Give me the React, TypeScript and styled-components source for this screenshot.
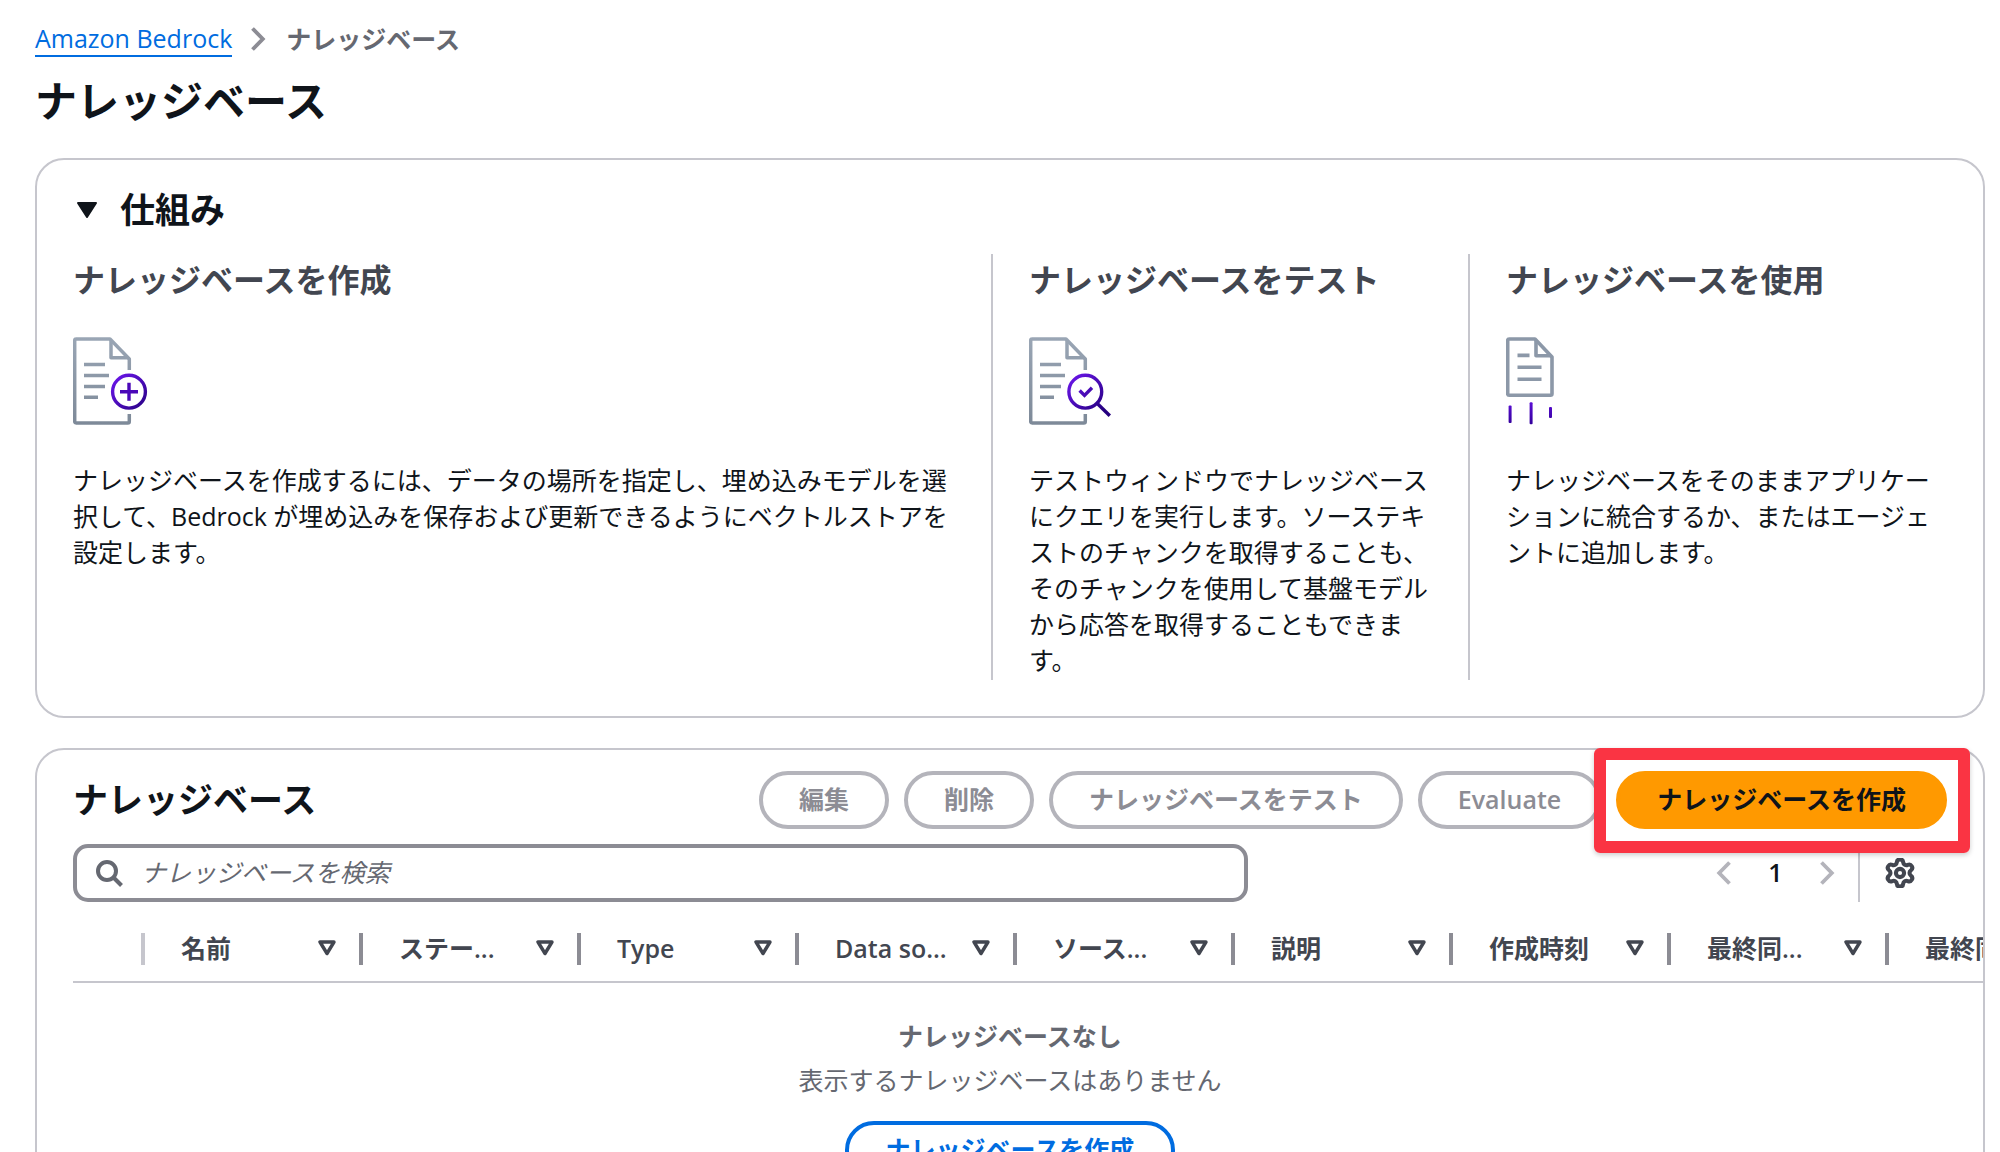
import React from 'react';
import styled, { createGlobalStyle, css } from 'styled-components';
import { Settings } from 'lucide-react';

const c = {
  text: '#0f141a',
  heading: '#424650',
  muted: '#656871',
  border: '#c6c6cd',
  control: '#8c8c94',
  disabled: '#b4b4bb',
  link: '#006ce0',
  primary: '#ff9900',
  mark: '#fa3443',
};

const GlobalStyle = createGlobalStyle`
  * { box-sizing: border-box; }
  body {
    margin: 0;
    background: #ffffff;
    color: ${c.text};
    font-family: 'Open Sans', 'Noto Sans CJK JP', sans-serif;
    font-size: 25px;
    line-height: 36px;
  }
  h1, h2, h3, p, ol { margin: 0; padding: 0; }
  button, input { font: inherit; color: inherit; }
  svg { display: block; flex: none; }
`;

const Page = styled.main`
  height: 100vh;
  padding: 21px 15px 0 35px;
  overflow-y: auto;
  scrollbar-width: none;
`;

const Breadcrumbs = styled.ol`
  display: flex;
  align-items: center;
  gap: 20px;
  list-style: none;
  color: ${c.muted};
  font-weight: 600;
`;

const Crumb = styled.li`
  display: flex;
  align-items: center;
  gap: 18px;
`;

const CrumbLink = styled.a`
  color: ${c.link};
  font-weight: 400;
  line-height: 34px;
  text-decoration: none;
  border-bottom: 2px solid currentColor;
`;

const CrumbSeparator = styled.span`
  color: ${c.control};
`;

const PageTitle = styled.h1`
  margin: 17px 0 30px;
  font-size: 42px;
  line-height: 54px;
  font-weight: 600;
`;

const Card = styled.section`
  border: 2px solid ${c.border};
  border-radius: 29px;
  & + & { margin-top: 30px; }
`;

const SectionTitle = styled.h2`
  font-size: 35px;
  line-height: 44px;
  font-weight: 600;
`;

const ExpandButton = styled.button`
  display: flex;
  align-items: center;
  gap: 21px;
  padding: 28px 36px 22px 38px;
  border: 0;
  background: none;
  text-align: left;
`;

const Steps = styled.div`
  display: grid;
  grid-template-columns: 2fr 1fr 1fr;
  padding: 0 38px 36px 0;
`;

const Step = styled.article`
  display: flex;
  flex-direction: column;
  gap: 37px;
  padding: 6px 36px 2px;
  & + & { border-left: 2px solid ${c.border}; }
  &:last-child { padding-right: 0; }
`;

const StepTitle = styled.h3`
  color: ${c.heading};
  font-size: 32px;
  line-height: 40px;
  font-weight: 600;
`;

const Toolbar = styled.div`
  display: flex;
  align-items: center;
  justify-content: space-between;
  padding: 21px 36px 15px;
`;

const Actions = styled.div`
  display: flex;
  gap: 15px;
`;

const Button = styled.button<{ $kind: 'disabled' | 'primary' | 'outline' }>`
  height: 58px;
  padding: 0 36px 2px;
  border: 4px solid;
  border-radius: 29px;
  background: #ffffff;
  font-weight: 600;
  white-space: nowrap;
  ${({ $kind }) => $kind === 'disabled' && css`
    border-color: ${c.disabled};
    color: ${c.control};
  `}
  ${({ $kind }) => $kind === 'primary' && css`
    padding: 0 37px 2px;
    border-color: ${c.primary};
    background: ${c.primary};
  `}
  ${({ $kind }) => $kind === 'outline' && css`
    padding: 0 37px 2px;
    border-color: ${c.link};
    color: ${c.link};
  `}
`;

const Marked = styled.div`
  position: relative;
  &::after {
    content: '';
    position: absolute;
    inset: -23px -23px -24px -22px;
    border: 12px solid ${c.mark};
    border-radius: 6px;
    box-shadow: 0 2px 5px rgba(0, 0, 0, 0.2);
    pointer-events: none;
  }
`;

const FilterRow = styled.div`
  display: flex;
  align-items: center;
  justify-content: space-between;
  padding: 0 68px 0 36px;
`;

const SearchBox = styled.label`
  display: flex;
  align-items: center;
  gap: 18px;
  flex: 0 1 1175px;
  height: 58px;
  padding: 0 19px;
  border: 4px solid ${c.control};
  border-radius: 15px;
  color: ${c.muted};
`;

const SearchInput = styled.input`
  flex: 1;
  min-width: 0;
  padding: 0 0 2px;
  border: 0;
  outline: 0;
  background: none;
  &::placeholder {
    color: ${c.muted};
    font-style: italic;
    opacity: 1;
  }
`;

const Pager = styled.div`
  display: flex;
  align-items: center;
  height: 58px;
`;

const IconButton = styled.button<{ $tone: string }>`
  display: grid;
  place-items: center;
  padding: 0;
  border: 0;
  background: none;
  color: ${({ $tone }) => $tone};
`;

const PageNumber = styled.button`
  width: 87px;
  padding: 0 0 2px;
  border: 0;
  background: none;
  font-weight: 600;
`;

const PagerDivider = styled.span`
  width: 2px;
  height: 58px;
  margin: 0 25px 0 23px;
  background: ${c.border};
`;

const TableScroll = styled.div`
  margin: 15px 0 0 36px;
  overflow-x: auto;
  scrollbar-width: none;
`;

const Table = styled.table`
  width: 2034px;
  table-layout: fixed;
  border-collapse: separate;
  border-spacing: 0;
`;

const HeadCell = styled.th<{ $select?: boolean }>`
  width: ${({ $select }) => ($select ? 72 : 218)}px;
  height: 66px;
  padding: 0;
  border-bottom: 2px solid ${c.border};
  background: linear-gradient(${({ $select }) => ($select ? c.border : c.control)} 0 0) right center / 4px 32px no-repeat;
`;

const SortButton = styled.button`
  display: flex;
  align-items: center;
  justify-content: space-between;
  width: 100%;
  padding: 0 27px 2px 36px;
  border: 0;
  background: none;
  color: ${c.heading};
  font-weight: 600;
  white-space: nowrap;
`;

const Empty = styled.div`
  display: flex;
  flex-direction: column;
  align-items: center;
  gap: 8px;
  padding: 35px 36px;
  color: ${c.muted};
`;

const EmptyAction = styled.div`
  margin-top: 15px;
`;

const Chevron = ({ left = false }: { left?: boolean }) => (
  <svg width="16" height="26" viewBox="0 0 16 26" fill="none" stroke="currentColor" strokeWidth="3.8" aria-hidden="true">
    <path d={left ? 'M13.5 2.5 3.2 13l10.3 10.5' : 'M2.5 2.5 12.8 13 2.5 23.5'} />
  </svg>
);

const Gradients = ({ id }: { id: string }) => (
  <defs>
    <linearGradient id={`${id}-gray`} x1="0" y1="0" x2="0" y2="88" gradientUnits="userSpaceOnUse">
      <stop stopColor="#9aa6b5" />
      <stop offset="1" stopColor="#7d8998" />
    </linearGradient>
    <linearGradient id={`${id}-violet`} x1="40" y1="40" x2="74" y2="74" gradientUnits="userSpaceOnUse">
      <stop stopColor="#6b16ea" />
      <stop offset="1" stopColor="#25007f" />
    </linearGradient>
    <linearGradient id={`${id}-drop`} x1="0" y1="65" x2="0" y2="87" gradientUnits="userSpaceOnUse">
      <stop stopColor="#5c0fd6" />
      <stop offset="1" stopColor="#33009c" />
    </linearGradient>
  </defs>
);

const DocumentOutline = ({ id }: { id: string }) => (
  <g stroke={`url(#${id}-gray)`} strokeWidth="3.5" strokeLinejoin="round">
    <path d="M56.3 33V22L37 2H3.2Q1.7 2 1.7 3.5V84.5Q1.7 86 3.2 86H54.8Q56.3 86 56.3 84.5V77" />
    <path d="M38 3V20.7H55.5" />
    <path d="M11 27.6H32M11 38.5H36M11 49.4H32M11 60.3H25" />
  </g>
);

const CreateIcon = () => (
  <svg width="82" height="88" viewBox="0 0 82 88" fill="none" aria-hidden="true">
    <Gradients id="create" />
    <DocumentOutline id="create" />
    <g stroke="url(#create-violet)" strokeWidth="3.4">
      <circle cx="56" cy="54.7" r="16.4" />
      <path d="M47 54.7H65M56 45.7V63.7" stroke="#4a07b8" />
    </g>
  </svg>
);

const TestIcon = () => (
  <svg width="82" height="88" viewBox="0 0 82 88" fill="none" aria-hidden="true">
    <Gradients id="test" />
    <DocumentOutline id="test" />
    <g stroke="url(#test-violet)" strokeWidth="3.4">
      <circle cx="56.3" cy="54.7" r="16.4" />
      <path d="M68.3 66.5 80.8 78.7" />
      <path d="M50.6 53.5 55.5 58.4 63 50.8" />
    </g>
  </svg>
);

const UseIcon = () => (
  <svg width="82" height="88" viewBox="0 0 82 88" fill="none" aria-hidden="true">
    <Gradients id="use" />
    <g stroke="#8c98a8" strokeWidth="3.6" strokeLinejoin="round">
      <path d="M29 2H3.2Q1.7 2 1.7 3.5V56.8Q1.7 58.3 3.2 58.3H44.5Q46 58.3 46 56.8V20L29 2Z" />
      <path d="M30 3V18.7H45M11.5 18.4H23.5M11.5 30.3H35.5M11.5 42.3H35.5" />
    </g>
    <g fill="url(#use-drop)">
      <rect x="2.6" y="68.5" width="3" height="17.5" rx="1" />
      <rect x="23.6" y="65.3" width="3" height="22" rx="1" />
      <rect x="43" y="70" width="3" height="11" rx="1" />
    </g>
  </svg>
);

const SearchIcon = () => (
  <svg width="27" height="27" viewBox="0 0 27 27" fill="none" stroke="currentColor" strokeWidth="4" aria-hidden="true">
    <circle cx="11" cy="11" r="9" />
    <path d="M17.5 17.5 25.5 25.5" />
  </svg>
);

const SortIcon = () => (
  <svg width="18" height="16" viewBox="0 0 18 16" fill="none" stroke="currentColor" strokeWidth="3.4" strokeLinejoin="round" aria-hidden="true">
    <path d="M2 2H16L9 13.5Z" />
  </svg>
);

const steps = [
  {
    title: 'ナレッジベースを作成',
    icon: <CreateIcon />,
    body: 'ナレッジベースを作成するには、データの場所を指定し、埋め込みモデルを選択して、Bedrock が埋め込みを保存および更新できるようにベクトルストアを設定します。',
  },
  {
    title: 'ナレッジベースをテスト',
    icon: <TestIcon />,
    body: 'テストウィンドウでナレッジベースにクエリを実行します。ソーステキストのチャンクを取得することも、そのチャンクを使用して基盤モデルから応答を取得することもできます。',
  },
  {
    title: 'ナレッジベースを使用',
    icon: <UseIcon />,
    body: 'ナレッジベースをそのままアプリケーションに統合するか、またはエージェントに追加します。',
  },
];

const columns = [
  { id: 'name', label: '名前' },
  { id: 'status', label: 'ステー...' },
  { id: 'type', label: 'Type' },
  { id: 'source', label: 'Data so...' },
  { id: 'files', label: 'ソース...' },
  { id: 'description', label: '説明' },
  { id: 'created', label: '作成時刻' },
  { id: 'synced', label: '最終同...' },
  { id: 'warnings', label: '最終同...' },
];

export default function App() {
  return (
    <Page lang="ja">
      <GlobalStyle />
      <nav aria-label="パンくずリスト">
        <Breadcrumbs>
          <Crumb>
            <CrumbLink href="#bedrock">Amazon Bedrock</CrumbLink>
            <CrumbSeparator><Chevron /></CrumbSeparator>
          </Crumb>
          <Crumb aria-current="page">ナレッジベース</Crumb>
        </Breadcrumbs>
      </nav>
      <PageTitle>ナレッジベース</PageTitle>

      <Card>
        <ExpandButton type="button" aria-expanded="true">
          <svg width="24" height="20" viewBox="0 0 24 20" fill="currentColor" stroke="currentColor" strokeWidth="2" strokeLinejoin="round" aria-hidden="true">
            <path d="M3 3H21L12 17Z" />
          </svg>
          <SectionTitle as="span">仕組み</SectionTitle>
        </ExpandButton>
        <Steps>
          {steps.map((step) => (
            <Step key={step.title}>
              <StepTitle>{step.title}</StepTitle>
              {step.icon}
              <p>{step.body}</p>
            </Step>
          ))}
        </Steps>
      </Card>

      <Card>
        <Toolbar>
          <SectionTitle>ナレッジベース</SectionTitle>
          <Actions>
            <Button type="button" disabled $kind="disabled">編集</Button>
            <Button type="button" disabled $kind="disabled">削除</Button>
            <Button type="button" disabled $kind="disabled">ナレッジベースをテスト</Button>
            <Button type="button" disabled $kind="disabled">Evaluate</Button>
            <Marked>
              <Button type="button" $kind="primary">ナレッジベースを作成</Button>
            </Marked>
          </Actions>
        </Toolbar>
        <FilterRow>
          <SearchBox>
            <SearchIcon />
            <SearchInput type="text" placeholder="ナレッジベースを検索" aria-label="ナレッジベースを検索" />
          </SearchBox>
          <Pager>
            <IconButton type="button" $tone={c.disabled} aria-label="前のページ"><Chevron left /></IconButton>
            <PageNumber type="button">1</PageNumber>
            <IconButton type="button" $tone={c.disabled} aria-label="次のページ"><Chevron /></IconButton>
            <PagerDivider />
            <IconButton type="button" $tone={c.heading} aria-label="設定">
              <Settings size={30} strokeWidth={3} viewBox="1 1 22 22" />
            </IconButton>
          </Pager>
        </FilterRow>
        <TableScroll>
          <Table>
            <thead>
              <tr>
                <HeadCell $select aria-label="選択" />
                {columns.map((column) => (
                  <HeadCell key={column.id} scope="col">
                    <SortButton type="button">
                      {column.label}
                      <SortIcon />
                    </SortButton>
                  </HeadCell>
                ))}
              </tr>
            </thead>
          </Table>
        </TableScroll>
        <Empty>
          <strong>ナレッジベースなし</strong>
          <p>表示するナレッジベースはありません</p>
          <EmptyAction>
            <Button type="button" $kind="outline">ナレッジベースを作成</Button>
          </EmptyAction>
        </Empty>
      </Card>
    </Page>
  );
}
